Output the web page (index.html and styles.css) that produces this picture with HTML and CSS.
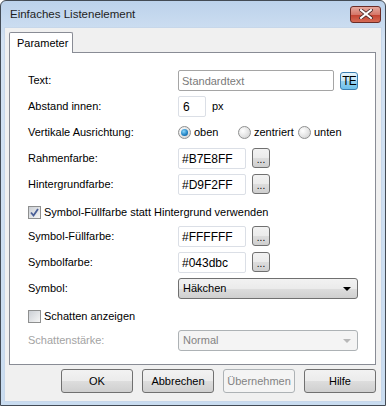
FILE: index.html
```html
<!DOCTYPE html>
<html lang="de">
<head>
  <meta charset="UTF-8">
  <title>Einfaches Listenelement</title>
  <link rel="stylesheet" href="styles.css">
</head>
<body>

  <div class="window">
    <div class="titlebar">
      <span class="title">Einfaches Listenelement</span>
      <div class="close">
        <svg width="14" height="10" viewBox="0 0 14 10">
          <path d="M2 1 L12 9 M12 1 L2 9" stroke="#4a2a28" stroke-width="3.6" stroke-linecap="square"/>
          <path d="M2 1 L12 9 M12 1 L2 9" stroke="#fff" stroke-width="2" stroke-linecap="square"/>
        </svg>
      </div>
    </div>

    <div class="client">
      <div class="tabs">
        <div class="tab">Parameter</div>
      </div>

      <div class="panel">
        <div class="row">
          <label class="lbl">Text:</label>
          <div class="field field-text placeholder">Standardtext</div>
          <div class="te">TE</div>
        </div>

        <div class="row">
          <label class="lbl">Abstand innen:</label>
          <div class="field field-num">6</div>
          <span class="unit">px</span>
        </div>

        <div class="row">
          <label class="lbl">Vertikale Ausrichtung:</label>
          <div class="radio-item"><span class="radio checked"></span>oben</div>
          <div class="radio-item"><span class="radio"></span>zentriert</div>
          <div class="radio-item"><span class="radio"></span>unten</div>
        </div>

        <div class="row">
          <label class="lbl">Rahmenfarbe:</label>
          <div class="field field-color">#B7E8FF</div>
          <div class="dots">...</div>
        </div>

        <div class="row">
          <label class="lbl">Hintergrundfarbe:</label>
          <div class="field field-color">#D9F2FF</div>
          <div class="dots">...</div>
        </div>

        <div class="row row-check">
          <span class="check checked">
            <svg width="9" height="9" viewBox="0 0 9 9">
              <path d="M1 4.5 L3.5 7.5 L8 1" fill="none" stroke="#4a5f97" stroke-width="1.8"/>
            </svg>
          </span>
          Symbol-Füllfarbe statt Hintergrund verwenden
        </div>

        <div class="row">
          <label class="lbl">Symbol-Füllfarbe:</label>
          <div class="field field-color">#FFFFFF</div>
          <div class="dots">...</div>
        </div>

        <div class="row">
          <label class="lbl">Symbolfarbe:</label>
          <div class="field field-color">#043dbc</div>
          <div class="dots">...</div>
        </div>

        <div class="row">
          <label class="lbl">Symbol:</label>
          <div class="select">Häkchen<span class="arrow"></span></div>
        </div>

        <div class="row row-check">
          <span class="check"></span>
          Schatten anzeigen
        </div>

        <div class="row">
          <label class="lbl disabled">Schattenstärke:</label>
          <div class="select select-disabled">Normal<span class="arrow"></span></div>
        </div>
      </div>

      <div class="buttons">
        <div class="btn">OK</div>
        <div class="btn">Abbrechen</div>
        <div class="btn btn-disabled">Übernehmen</div>
        <div class="btn">Hilfe</div>
      </div>
    </div>
  </div>

</body>
</html>
```

FILE: styles.css
```css
body {
  margin: 0;
  font-family: "Liberation Sans", Arial, sans-serif;
  font-size: 11px;
  color: #000;
  background: #fff;
}
.window {
  box-sizing: border-box;
  width: 386px;
  height: 406px;
  border: 1px solid #434b55;
  border-radius: 6px 6px 0 0;
  background: linear-gradient(#bcd2eb, #d3e2f3 40px, #c9dcf0);
  padding: 0 3px 3px 3px;
  display: flex;
  flex-direction: column;
}
.titlebar {
  height: 26px;
  display: flex;
  align-items: center;
  justify-content: space-between;
  padding-left: 6px;
}
.title {
  font-size: 11.5px;
  color: #1e1e1e;
  margin-top: -1px;
}
.close {
  width: 31px;
  height: 17px;
  margin-right: 1px;
  box-sizing: border-box;
  border: 1px solid #6b2c26;
  border-radius: 3px;
  background: linear-gradient(#e5a89d, #d6786a 50%, #c2402f 51%, #d66b55);
  display: flex;
  align-items: center;
  justify-content: center;
}
.client {
  flex: 1;
  background: #f0f0f0;
  border: 1px solid #c7d7ea;
  padding: 4px 5px 0 4px;
}
.tabs {
  display: flex;
  height: 20px;
}
.tab {
  box-sizing: border-box;
  height: 21px;
  padding: 4px 0 0 7px;
  width: 64px;
  border: 1px solid #898c95;
  border-bottom: none;
  border-radius: 2px 2px 0 0;
  background: #fff;
  position: relative;
  z-index: 1;
}
.panel {
  box-sizing: border-box;
  height: 313px;
  border: 1px solid #898c95;
  background: #fff;
  padding: 14px 0 0 18px;
}
.row {
  height: 26px;
  display: flex;
  align-items: center;
}
.row-check {
  box-sizing: border-box;
  padding-top: 4px;
}
.lbl {
  width: 150px;
  flex-shrink: 0;
}
.lbl.disabled {
  color: #a3a3a3;
}
.field {
  box-sizing: border-box;
  height: 21px;
  border: 1px solid #dbdfe6;
  border-top-color: #abadb3;
  border-radius: 2px;
  background: #fff;
  padding: 3px 0 0 3px;
  font-size: 12px;
}
.field-text {
  width: 156px;
  border-color: #a5a5a5;
  font-size: 11px;
  padding-top: 4px;
}
.placeholder {
  color: #7a7a7a;
}
.field-num {
  width: 28px;
  border-top-color: #dbdfe6;
  padding-left: 4px;
}
.field-color {
  width: 68px;
  border-top-color: #dbdfe6;
}
.unit {
  margin-left: 6px;
}
.te {
  box-sizing: border-box;
  width: 18px;
  height: 18px;
  margin-left: 6px;
  margin-top: 2px;
  border: 1px solid #3c7fb1;
  border-radius: 3px;
  background: linear-gradient(#e5f4fc, #c4e5f6 50%, #98d1ef 51%, #6dc0eb);
  font-size: 12px;
  display: flex;
  align-items: center;
  justify-content: center;
  letter-spacing: -1px;
}
.dots {
  box-sizing: border-box;
  width: 18px;
  height: 20px;
  margin-left: 6px;
  border: 1px solid #707070;
  border-radius: 3px;
  background: linear-gradient(#f2f2f2, #ebebeb 50%, #dddddd 51%, #cfcfcf);
  display: flex;
  align-items: flex-end;
  justify-content: center;
  padding-bottom: 3px;
  font-size: 10px;
  line-height: 8px;
}
.radio-item {
  width: 60px;
  display: flex;
  align-items: center;
}
.radio {
  box-sizing: border-box;
  width: 13px;
  height: 13px;
  border-radius: 50%;
  border: 1px solid #8e8f8f;
  background: radial-gradient(circle at 35% 35%, #ffffff, #dcdcdc 70%, #c8c8c8);
  margin-right: 3px;
  position: relative;
}
.radio.checked::after {
  content: "";
  position: absolute;
  left: 2px;
  top: 2px;
  width: 7px;
  height: 7px;
  border-radius: 50%;
  background: radial-gradient(circle at 40% 35%, #8ad6fb, #1d7fc1 60%, #0b4f8a);
}
.check {
  box-sizing: border-box;
  width: 13px;
  height: 13px;
  border: 1px solid #8e8f8f;
  background: linear-gradient(135deg, #cbcfd5, #f6f6f6);
  margin-right: 3px;
  display: flex;
  align-items: center;
  justify-content: center;
}
.select {
  box-sizing: border-box;
  width: 180px;
  height: 21px;
  border: 1px solid #707070;
  border-radius: 3px;
  background: linear-gradient(#f2f2f2, #ebebeb 50%, #dddddd 51%, #cfcfcf);
  padding-left: 4px;
  display: flex;
  align-items: center;
  position: relative;
}
.arrow {
  position: absolute;
  right: 6px;
  top: 8px;
  width: 0;
  height: 0;
  border-left: 4px solid transparent;
  border-right: 4px solid transparent;
  border-top: 4px solid #000;
}
.select-disabled {
  border-color: #adb2b5;
  background: #f4f4f4;
  color: #838383;
}
.select-disabled .arrow {
  border-top-color: #b8b8b8;
}
.buttons {
  display: flex;
  justify-content: flex-end;
  gap: 9px;
  padding-top: 4px;
}
.btn {
  box-sizing: border-box;
  width: 72px;
  height: 24px;
  border: 1px solid #707070;
  border-radius: 3px;
  background: linear-gradient(#f2f2f2, #ebebeb 50%, #dddddd 51%, #cfcfcf);
  display: flex;
  align-items: center;
  justify-content: center;
}
.btn-disabled {
  border-color: #adb2b5;
  background: #f4f4f4;
  color: #838383;
}
```
